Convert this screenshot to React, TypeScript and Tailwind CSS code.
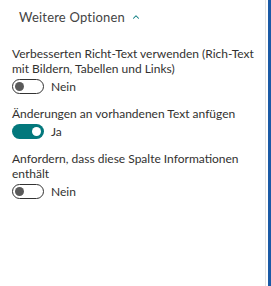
import { ChevronUp } from 'lucide-react'

type Opt = { label: string; on: boolean }

const OPTIONS: Opt[] = [
  { label: 'Verbesserten Richt-Text verwenden (Rich-Text mit Bildern, Tabellen und Links)', on: false },
  { label: 'Änderungen an vorhandenen Text anfügen', on: true },
  { label: 'Anfordern, dass diese Spalte Informationen enthält', on: false },
]

function Toggle({ on }: { on: boolean }) {
  return (
    <div className="h-[20px] flex items-center gap-[7px]">
      {on ? (
        <div className="w-[32px] h-[15px] rounded-full bg-[#03787c] flex items-center justify-end pr-[3px]">
          <div className="w-[9px] h-[9px] rounded-full bg-white" />
        </div>
      ) : (
        <div className="w-[32px] h-[15px] rounded-full border border-[#333] flex items-center pl-[2px]">
          <div className="w-[9px] h-[9px] rounded-full bg-[#5a5a5a]" />
        </div>
      )}
      <span className="text-[#323130]">{on ? 'Ja' : 'Nein'}</span>
    </div>
  )
}

export default function App() {
  return (
    <div className="w-[271px] h-[286px] bg-white flex" style={{ fontFamily: 'Lato, sans-serif' }}>
      <div className="flex-1 border-r border-[#e3e3e3] text-[12px] leading-[15px]">
        <button className="mt-[9px] ml-[19px] h-[16px] flex items-center gap-[6px] text-[13px] tracking-[0.2px] text-[#444]">
          Weitere Optionen
          <ChevronUp className="w-[10px] h-[10px] text-[#03787c]" strokeWidth={2.5} />
        </button>

        <div className="mt-[21px] pl-[12px] pr-[10px] flex flex-col gap-[10px]">
          {OPTIONS.map(o => (
            <div key={o.label} className="flex flex-col">
              <p className="text-[#323130]">{o.label}</p>
              <Toggle on={o.on} />
            </div>
          ))}
        </div>
      </div>
      <div className="w-[2px]" />
      <div className="w-[3px] bg-[#1b5aa6]" />
    </div>
  )
}
